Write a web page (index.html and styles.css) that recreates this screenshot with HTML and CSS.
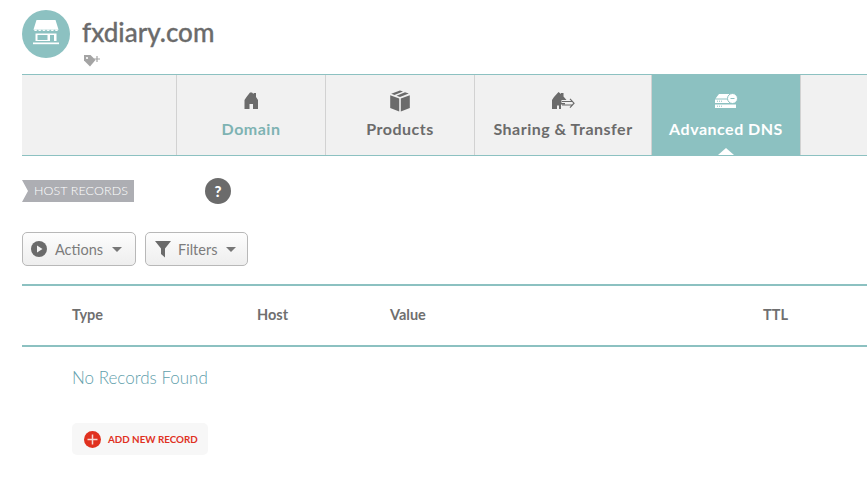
FILE: index.html
```html
<!DOCTYPE html>
<html lang="en">
<head>
<meta charset="utf-8">
<title>fxdiary.com</title>
<link rel="stylesheet" href="styles.css">
</head>
<body>
<header class="head">
  <div class="avatar">
    <svg viewBox="0 0 48 48" width="48" height="48">
      <path d="M14.500 10h19l3 9.500H11.500z" fill="#fff"/>
      <path d="M11.500 19.500q2.100 3.200 4.200 0q2.100 3.200 4.200 0q2.100 3.200 4.100 0q2.100 3.200 4.200 0q2.100 3.200 4.200 0q2.100 3.200 4.100 0z" fill="#fff"/>
      <path fill-rule="evenodd" d="M13.500 23.500h21V31h-21zM15.500 25v5h10v-5zM28 25v6h4v-6z" fill="#fff"/>
      <rect x="11" y="32.500" width="26" height="1.700" fill="#fff"/>
    </svg>
  </div>
  <div class="head-text">
    <h1 class="domain">fxdiary.com</h1>
    <svg class="tag" viewBox="0 0 18 13" width="18" height="13">
      <path d="M1 1h6.500l5 5-5.500 6.500L1 6.500z" fill="#a4a4a4"/>
      <circle cx="4" cy="4" r="1.100" fill="#fff"/>
      <path d="M11 5h6M14 2v6" stroke="#a4a4a4" stroke-width="1.200" fill="none"/>
    </svg>
  </div>
</header>

<nav class="tabs">
  <div class="tab-spacer"></div>
  <a class="tab tab-domain">
    <svg viewBox="0 0 18 18" width="18" height="18">
      <path fill-rule="evenodd" d="M8 0.500h2l1.500 1.500V1h2.500v4l2 3V17h-5v-5H7.500v5h-5V8l2-3z" fill="#6b6b6b"/>
    </svg>
    <span>Domain</span>
  </a>
  <a class="tab">
    <svg viewBox="0 0 22 22" width="22" height="22">
      <path d="M11 0.500l3 1.100-8.500 3.300-3.300-1.200zM16 2.300l3.800 1.300L11 7 7.500 5.700z" fill="#6b6b6b"/>
      <path d="M1.200 5.200l9 3.400V21.500l-9-3.500zM20.800 5.200v12.800l-9 3.500V8.600z" fill="#6b6b6b"/>
    </svg>
    <span>Products</span>
  </a>
  <a class="tab tab-share">
    <svg viewBox="0 0 24 18" width="24" height="18">
      <path d="M7.500 0l2.500 2V1h2.500v3.500l3 3.500h-5v3h3.500v1.500H10V17H8v-3.500H6V17H1V8l2-3z" fill="#6b6b6b"/>
      <path d="M11 9.500h11M11 13h11M19 6.800l4 4.400-4 4.400" stroke="#6b6b6b" stroke-width="1.200" fill="none"/>
    </svg>
    <span>Sharing &amp; Transfer</span>
  </a>
  <a class="tab tab-active">
    <svg viewBox="0 0 24 16" width="24" height="16">
      <path d="M5 1h10l3 4.500H1.500z" fill="#fff"/>
      <rect x="1" y="6.500" width="21" height="3.500" fill="#fff"/>
      <rect x="1" y="11.500" width="21" height="3.500" fill="#fff"/>
      <path d="M3 8.200h5M3 13.200h5" stroke="#8cc1c1" stroke-width="1" stroke-dasharray="1 1" fill="none"/>
      <circle cx="18.500" cy="5.500" r="5" fill="#fff" stroke="#8cc1c1" stroke-width="1"/>
      <path d="M16.500 5.500h4" stroke="#8cc1c1" stroke-width="1" fill="none"/>
    </svg>
    <span>Advanced DNS</span>
  </a>
</nav>

<section class="records-head">
  <div class="ribbon">HOST RECORDS</div>
  <div class="help">?</div>
</section>

<div class="toolbar">
  <button class="btn btn-actions">
    <svg viewBox="0 0 16 16" width="16" height="16">
      <circle cx="8" cy="8" r="8" fill="#6b6b6b"/>
      <path d="M6 4.500l5.500 3.500L6 11.500z" fill="#f3f3f3"/>
    </svg>
    <span>Actions</span>
    <i class="caret"></i>
  </button>
  <button class="btn btn-filters">
    <svg viewBox="0 0 16 18" width="16" height="18">
      <path d="M0 1h16L10 8.500V17.500L6 14V8.500z" fill="#6b6b6b"/>
    </svg>
    <span>Filters</span>
    <i class="caret"></i>
  </button>
</div>

<div class="table-head">
  <div class="col col-type">Type</div>
  <div class="col col-host">Host</div>
  <div class="col col-value">Value</div>
  <div class="col col-ttl">TTL</div>
</div>

<p class="empty">No Records Found</p>

<a class="add">
  <svg viewBox="0 0 17 17" width="17" height="17">
    <circle cx="8.500" cy="8.500" r="8.500" fill="#e0311f"/>
    <path d="M8.500 3.500v10M3.500 8.500h10" stroke="#f6d9d4" stroke-width="1.500" fill="none"/>
  </svg>
  <span>ADD NEW RECORD</span>
</a>
</body>
</html>
```
FILE: styles.css
```css
* { box-sizing: border-box; }
html, body { margin: 0; padding: 0; }
body {
  width: 867px;
  height: 478px;
  overflow: hidden;
  background: #fff;
  padding-left: 22px;
  font-family: "Lato", "Open Sans", sans-serif;
  color: #6b6b6b;
}
.head {
  display: flex;
  gap: 12px;
  height: 74px;
  padding-top: 10px;
}
.avatar {
  width: 48px;
  height: 48px;
  border-radius: 50%;
  background: #8cc1c1;
  flex: none;
}
.avatar svg { display: block; }
.head-text { display: flex; flex-direction: column; }
.domain {
  margin: 7px 0 0;
  font-size: 26px;
  line-height: 30px;
  font-weight: 500;
  color: #6b6b6b;
  -webkit-text-stroke: 0.3px #6b6b6b;
}
.tag { margin-top: 7px; margin-left: 1px; display: block; }
.tabs {
  display: flex;
  height: 82px;
  background: #f1f1f1;
  border-top: 1px solid #8cc1c1;
  border-bottom: 1px solid #8cc1c1;
}
.tab-spacer {
  width: 155px;
  border-right: 1px solid #d2d2d2;
}
.tab {
  width: 149px;
  display: flex;
  flex-direction: column;
  align-items: center;
  border-right: 1px solid #d2d2d2;
  font-size: 16px;
  font-weight: 700;
  letter-spacing: 0.5px;
  color: #6b6b6b;
  position: relative;
}
.tab svg { margin-top: 15px; height: 22px; }
.tab span { margin-top: 7px; line-height: 20px; }
.tab-domain span { color: #7eb3b3; }
.tab-share { width: 177px; }
.tab-active {
  background: #8cc1c1;
  color: #fff;
}
.tab-active::after {
  content: "";
  position: absolute;
  left: 50%;
  bottom: 0;
  margin-left: -8px;
  border-left: 8px solid transparent;
  border-right: 8px solid transparent;
  border-bottom: 7px solid #fff;
}
.records-head {
  display: flex;
  align-items: center;
  height: 26px;
  margin-top: 22px;
}
.ribbon {
  width: 112px;
  height: 22px;
  background: #adaeb3;
  color: #fff;
  font-size: 12.500px;
  font-weight: 300;
  letter-spacing: 0.1px;
  line-height: 22px;
  padding-left: 12px;
  clip-path: polygon(0 0, 100% 0, 100% 100%, 0 100%, 6px 50%);
}
.help {
  width: 26px;
  height: 26px;
  margin-left: 71px;
  border-radius: 50%;
  background: #6b6b6b;
  color: #fff;
  font-size: 15px;
  font-weight: 900;
  line-height: 26px;
  text-align: center;
}
.toolbar {
  display: flex;
  gap: 9px;
  margin-top: 28px;
}
.btn {
  display: flex;
  align-items: center;
  height: 34px;
  padding: 0;
  border: 1px solid #b8b8b8;
  border-radius: 5px;
  background: linear-gradient(#fdfdfd, #eeeeee);
  font: inherit;
  font-size: 14.500px;
  color: #7c7c7c;
}
.btn-actions { width: 114px; padding-left: 8px; }
.btn-filters { width: 103px; padding-left: 9px; }
.btn-actions span { margin-left: 8px; }
.btn-filters span { margin-left: 7px; }
.btn-actions .caret { margin-left: 9px; }
.btn-filters .caret { margin-left: 9px; }
.caret {
  border-left: 5px solid transparent;
  border-right: 5px solid transparent;
  border-top: 5px solid #777;
}
.table-head {
  display: flex;
  height: 63px;
  margin-top: 18px;
  padding-bottom: 2px;
  border-top: 2px solid #8cc1c1;
  border-bottom: 2px solid #8cc1c1;
  align-items: center;
  font-size: 14.500px;
  font-weight: 700;
  color: #6f6f6f;
}
.col-type { margin-left: 50px; width: 185px; }
.col-host { width: 133px; }
.col-value { width: 373px; }
.empty {
  margin: 21px 0 0 50px;
  font-size: 17px;
  line-height: 20px;
  font-weight: 300;
  color: #5fa0ac;
}
.add {
  display: flex;
  align-items: center;
  width: 136px;
  height: 32px;
  margin: 35px 0 0 50px;
  padding-left: 12px;
  gap: 7px;
  background: #f7f7f7;
  border-radius: 5px;
  font-size: 9.800px;
  font-weight: 700;
  color: #e0311f;
}
```
